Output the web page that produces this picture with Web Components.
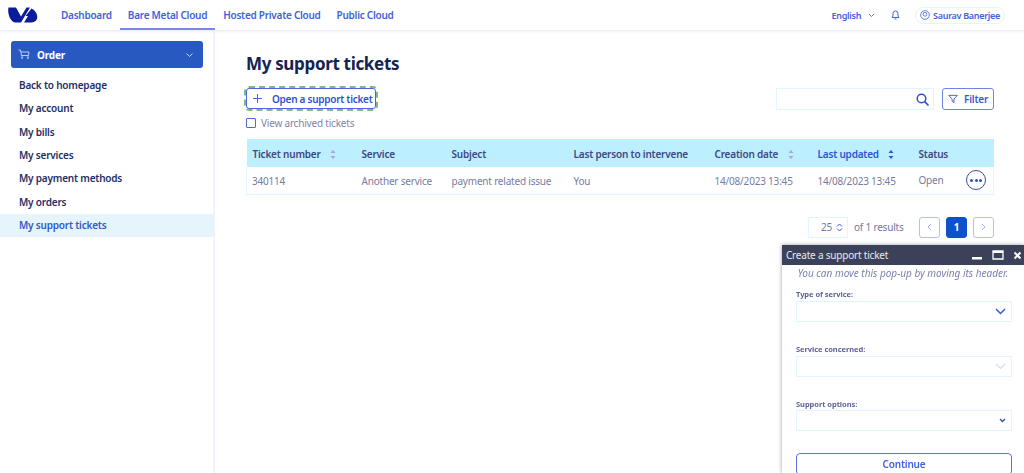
<!DOCTYPE html>
<html lang="en"><head><meta charset="utf-8"><title>My support tickets</title>
<style>
html,body{margin:0;height:473px;overflow:hidden;background:#fff}
body{font:600 10px "Noto Sans",sans-serif;color:#1a2a63;letter-spacing:-.2px}
</style></head><body>
<app-shell>
  <top-bar slot="top"></top-bar>
  <side-nav slot="side"></side-nav>
  <ticket-page slot="main"></ticket-page>
</app-shell>
<ticket-popup></ticket-popup>
<script>
function def(name, html){
  customElements.define(name, class extends HTMLElement{
    constructor(){super();this.attachShadow({mode:'open'}).innerHTML=html;}
  });
}
const FONT='"Noto Sans",sans-serif';
def('app-shell',`<style>
:host{display:grid;grid-template-columns:215px 1fr;grid-template-rows:30px 443px;width:1024px;height:473px}
.t{grid-column:1/3;display:block;position:relative;z-index:2}
</style><div class="t"><slot name="top"></slot></div><slot name="side"></slot><slot name="main"></slot>`);

def('top-bar',`<style>
:host{display:flex;align-items:center;height:30px;background:#fff;box-shadow:0 1px 3px #e6e8f6;font:600 10px ${FONT};letter-spacing:-.26px;color:#3f62d8}
svg{display:block;flex:none}
.logo{margin-left:8px;width:30px;height:17px}
nav{display:flex;margin-left:15px;height:30px}
nav a{display:flex;align-items:center;padding:0 8px;box-sizing:border-box;height:30px;white-space:nowrap}
nav a.on{border-bottom:2px solid #7a86ec;padding-top:2px}
.r{margin-left:auto;display:flex;align-items:center;padding-right:20px;font-size:9px;letter-spacing:-.3px}
.user{display:flex;align-items:center;gap:3px;height:15px;border:1px solid #dff5ff;border-radius:9px;padding:0 4px;margin-left:15px}
.bell{margin-left:16px}.chev{margin-left:7px}
</style>
<svg class="logo" viewBox="0 0 30 17"><path fill="#0d1a9a" d="M.5 .5H8L13 9.500 18.500 .5H22L13 15.500H7.500C3 15.500-1 7 .5 .5Z"/><path fill="#0d1a9a" d="M23.500 1.500C29 4 31 11 27.500 14 26 15.500 24 15.500 22 15.500H16L20 9H17.500Z"/></svg>
<nav><a>Dashboard</a><a class="on">Bare Metal Cloud</a><a>Hosted Private Cloud</a><a>Public Cloud</a></nav>
<div class="r"><span>English</span>
<svg class="chev" width="7" height="5" viewBox="0 0 7 5"><path d="M1 1l2.500 2.500L6 1" fill="none" stroke="#5c78dc"/></svg>
<svg class="bell" width="9" height="10" viewBox="0 0 9 10"><path d="M1 7.500h7L7 6V3.500a2.500 2.500 0 0 0-5 0V6zM3.500 9h2" fill="none" stroke="#3f62d8"/></svg>
<span class="user"><svg width="10" height="10" viewBox="0 0 10 10"><circle cx="5" cy="5" r="4.300" fill="none" stroke="#3f62d8" stroke-width=".8"/><circle cx="5" cy="4.300" r="1.900" fill="none" stroke="#3f62d8" stroke-width=".8"/></svg>Saurav Banerjee</span></div>`);

def('side-nav',`<style>
:host{display:block;height:443px;box-sizing:border-box;border-right:2px solid #f2f2fd;padding-top:11px;font:600 10px ${FONT};color:#1e2f63}
.order{display:flex;align-items:center;height:27px;margin:0 10px 0 11px;background:#2859c0;border-radius:3px;color:#fff;padding:0 9px 0 7px}
.order b{font-weight:700;margin-left:7px}
.order svg{flex:none}
.order svg:last-child{margin-left:auto}
ul{list-style:none;margin:6px 0 0;padding:0}
li{height:23.330px;line-height:23.330px;padding-left:19px}
li.on{background:#e6f4fc;color:#2c5bc8}
</style>
<div class="order"><svg width="12" height="11" viewBox="0 0 12 11"><path d="M.5 1H2.500L3.500 6.500H10.500L11 3H3M4 6.500V10M10 6.500V10M4 9H5M9 9H10" fill="none" stroke="#cfdaf5" stroke-width=".9"/></svg><b>Order</b><svg width="9" height="6" viewBox="0 0 9 6"><path d="M1.500 1.500L4.500 4.500 7.500 1.500" fill="none" stroke="#cfdaf5"/></svg></div>
<ul><li>Back to homepage</li><li>My account</li><li>My bills</li><li>My services</li><li>My payment methods</li><li>My orders</li><li class="on">My support tickets</li></ul>`);

def('ticket-page',`<style>
:host{display:block;padding:22px 31px 0 31px;font:400 10px ${FONT};color:#7478a3}
h1{margin:0;font:700 17px/24px ${FONT};letter-spacing:-.33px;color:#14234f;height:25px}
.bar{display:flex;align-items:flex-start;margin-top:11px;height:22px}
.open{display:flex;align-items:center;box-sizing:border-box;width:130px;height:21px;border:1px solid #4f63e0;border-radius:3px;outline:2px dashed #7dbb85;outline-offset:0;color:#2f50cf;font-weight:600;letter-spacing:-.27px;padding-left:5px;white-space:nowrap}
.open svg{margin-right:9px;flex:none}
.search{margin-left:auto;display:flex;align-items:center;justify-content:flex-end;box-sizing:border-box;width:158px;height:22px;border:1px solid #dff5ff;padding-right:3px}
.filter{display:flex;align-items:center;box-sizing:border-box;margin-left:8px;width:52px;height:22px;border:1.500px solid #6f83e6;border-radius:3px;color:#3958cf;font-weight:600;padding-left:5px}
.filter svg{margin-right:6px;flex:none}
.arch{display:flex;align-items:center;margin-top:7px;height:12px;color:#7f83a8}
.box{width:8px;height:8px;border:1.500px solid #5468d8;border-radius:1px;margin-right:5px}
table{border-collapse:collapse;table-layout:fixed;width:747px;margin-top:10px}
th{height:28px;background:#bcefff;text-align:left;padding:2px 0 0 6px;font-weight:600;color:#42477f;white-space:nowrap;box-sizing:border-box}
th.sel{color:#2f55cf}
th svg{margin-left:7px;vertical-align:-1px}
td{height:27px;padding:1px 0 0 6px;color:#777b9f;white-space:nowrap;box-sizing:border-box;border-bottom:1px solid #dff5ff}
td:first-child{border-left:1px solid #dff5ff;padding-left:5px}td:last-child{border-right:1px solid #dff5ff;padding-top:0}
.st{display:flex;align-items:center;justify-content:space-between;padding-right:7px}
.more{width:20px;height:20px;box-sizing:border-box;border:1.500px solid #3c4d95;border-radius:50%;display:flex;align-items:center;justify-content:center;gap:1.200px}
.more i{width:3px;height:3px;border-radius:50%;background:#2b4fd0}
.pg{display:flex;align-items:center;justify-content:flex-end;margin-top:22px}
.sel25{display:flex;align-items:center;justify-content:flex-end;box-sizing:border-box;width:40px;height:21px;border:1px solid #dff5ff;gap:4px;padding-right:4px}
.of{margin:0 16px 0 6px;width:49px;white-space:nowrap}
.b{display:flex;align-items:center;justify-content:center;box-sizing:border-box;width:21px;height:21px;border:1.500px solid #b3c0f0;border-radius:3px}
.b.on{background:#0f50cc;border-color:#0f50cc;color:#fff;font-weight:700;margin:0 6px}
</style>
<h1>My support tickets</h1>
<div class="bar">
<div class="open"><svg width="11" height="11" viewBox="0 0 11 11"><path d="M5.500 1v9M1 5.500h9" stroke="#4f63e0"/></svg>Open a support ticket</div>
<div class="search"><svg width="15" height="15" viewBox="0 0 15 15"><circle cx="6.500" cy="6.500" r="4.300" fill="none" stroke="#2f50cf" stroke-width="1.500"/><path d="M9.700 9.700L13.500 13.500" stroke="#2f50cf" stroke-width="1.700"/></svg></div>
<div class="filter"><svg width="10" height="10" viewBox="0 0 11 10"><path d="M.800 1h9.400L6.500 5v4L4.500 7.500V5z" fill="none" stroke="#3958cf"/></svg>Filter</div>
</div>
<div class="arch"><span class="box"></span>View archived tickets</div>
<table><colgroup><col style="width:109px"><col style="width:90px"><col style="width:122px"><col style="width:141px"><col style="width:103px"><col style="width:101px"><col style="width:81px"></colgroup>
<tr><th>Ticket number <svg width="6" height="9" viewBox="0 0 6 9"><path d="M3 0l2.500 3h-5zM3 9L.5 6h5z" fill="#a6aacb"/></svg></th><th>Service</th><th>Subject</th><th>Last person to intervene</th><th>Creation date <svg width="6" height="9" viewBox="0 0 6 9"><path d="M3 0l2.500 3h-5zM3 9L.5 6h5z" fill="#a6aacb"/></svg></th><th class="sel">Last updated <svg width="6" height="9" viewBox="0 0 6 9"><path d="M3 0l2.500 3h-5zM3 9L.5 6h5z" fill="#2f55cf"/></svg></th><th>Status</th></tr>
<tr><td>340114</td><td>Another service</td><td>payment related issue</td><td>You</td><td>14/08/2023 13:45</td><td>14/08/2023 13:45</td><td><div class="st">Open<span class="more"><i></i><i></i><i></i></span></div></td></tr>
</table>
<div class="pg"><div class="sel25">25<svg width="7" height="9" viewBox="0 0 7 9"><path d="M1 3.500l2.500-2.500L6 3.500M1 5.500L3.500 8 6 5.500" fill="none" stroke="#3958cf"/></svg></div><span class="of">of 1 results</span>
<div class="b"><svg width="5" height="8" viewBox="0 0 5 8"><path d="M4 1L1 4l3 3" fill="none" stroke="#a8b7ec"/></svg></div><div class="b on">1</div><div class="b"><svg width="5" height="8" viewBox="0 0 5 8"><path d="M1 1l3 3-3 3" fill="none" stroke="#a8b7ec"/></svg></div></div>`);

def('ticket-popup',`<style>
:host{position:fixed;left:782px;top:245px;width:242px;height:228px;background:#fff;box-shadow:0 0 4px #9a9aa8;font:400 10px ${FONT};letter-spacing:-.2px;color:#5a5f90;overflow:hidden}
.h{display:flex;align-items:center;height:20px;background:#3b4159;color:#e8e9f0;padding:0 0 0 4px}
.h span{flex:1}
.h svg{display:block}
.note{text-align:center;font-style:italic;color:#7c80ad;height:17px;line-height:17px;white-space:nowrap;letter-spacing:0}
form{padding:8px 12px 0 14px;display:block}
label{display:block;font:700 7.5px/8px ${FONT};height:10px;letter-spacing:-.05px;color:#5e6395}
.s{box-sizing:border-box;height:21px;margin-top:1px;border:1px solid #dff5ff;display:flex;align-items:center;justify-content:flex-end;padding-right:5px}
.gap{height:23px}
.c{box-sizing:border-box;height:22px;border:1.500px solid #5d72e0;border-radius:4px;display:flex;align-items:center;justify-content:center;color:#3f5fd8;font-weight:600}
</style>
<div class="h"><span>Create a support ticket</span>
<svg width="12" height="12" viewBox="0 0 12 12" style="margin-right:9px"><rect x="1" y="8" width="10" height="2.500" fill="#fff"/></svg>
<svg width="12" height="12" viewBox="0 0 12 12" style="margin-right:9px"><path d="M1 2h10v8H1z" fill="none" stroke="#fff" stroke-width="1.300"/><path d="M1 2h10v2H1z" fill="#fff"/></svg>
<svg width="9" height="9" viewBox="0 0 9 9" style="margin-right:2px"><path d="M1.500 1.500l6 6M7.500 1.500l-6 6" stroke="#fff" stroke-width="2"/></svg></div>
<div class="note">You can move this pop-up by moving its header.</div>
<form>
<label>Type of service:</label><div class="s"><svg width="11" height="7" viewBox="0 0 11 7"><path d="M1 1l4.500 4.500L10 1" fill="none" stroke="#2f5fc8" stroke-width="1.500"/></svg></div>
<div class="gap"></div>
<label>Service concerned:</label><div class="s"><svg width="11" height="7" viewBox="0 0 11 7"><path d="M1 1l4.500 4.500L10 1" fill="none" stroke="#cfdcf5" stroke-width="1.200"/></svg></div>
<div class="gap"></div>
<label>Support options:</label><div class="s" style="margin-top:0"><svg width="7" height="5" viewBox="0 0 7 5"><path d="M1 1l2.500 2.500L6 1" fill="none" stroke="#3a4f90" stroke-width="1.300"/></svg></div>
<div class="gap" style="height:22px"></div>
<div class="c">Continue</div>
</form>`);
</script></body></html>
